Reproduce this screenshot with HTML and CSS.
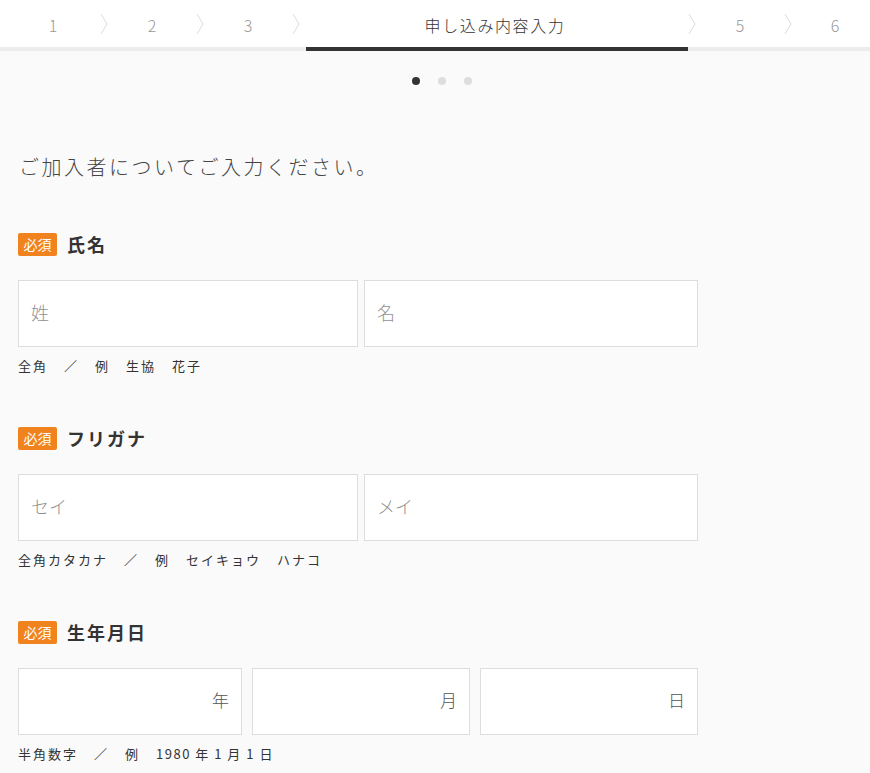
FILE: index.html
```html
<!DOCTYPE html>
<html lang="ja">
<head>
<meta charset="UTF-8">
<meta name="viewport" content="width=device-width, initial-scale=1.0">
<title>申し込み内容入力</title>
<link rel="stylesheet" href="styles.css">
</head>
<body>
<nav class="steps">
  <div class="step first">1</div>
  <svg class="chev" viewBox="0 0 8 20"><polyline points="1,0 7,10 1,20"/></svg>
  <div class="step">2</div>
  <svg class="chev" viewBox="0 0 8 20"><polyline points="1,0 7,10 1,20"/></svg>
  <div class="step">3</div>
  <svg class="chev" viewBox="0 0 8 20"><polyline points="1,0 7,10 1,20"/></svg>
  <div class="step active">申し込み内容入力</div>
  <svg class="chev" viewBox="0 0 8 20"><polyline points="1,0 7,10 1,20"/></svg>
  <div class="step">5</div>
  <svg class="chev" viewBox="0 0 8 20"><polyline points="1,0 7,10 1,20"/></svg>
  <div class="step last">6</div>
</nav>

<div class="dots">
  <span class="dot on"></span>
  <span class="dot"></span>
  <span class="dot"></span>
</div>

<main class="form">
  <h1 class="lead">ご加入者についてご入力ください。</h1>

  <section class="field">
    <div class="label"><span class="req">必須</span>氏名</div>
    <div class="inputs two">
      <input type="text" placeholder="姓">
      <input type="text" placeholder="名">
    </div>
    <p class="hint"><span>全角</span><span>／</span><span>例</span><span>生協</span><span>花子</span></p>
  </section>

  <section class="field">
    <div class="label"><span class="req">必須</span>フリガナ</div>
    <div class="inputs two">
      <input type="text" placeholder="セイ">
      <input type="text" placeholder="メイ">
    </div>
    <p class="hint"><span>全角カタカナ</span><span>／</span><span>例</span><span>セイキョウ</span><span>ハナコ</span></p>
  </section>

  <section class="field">
    <div class="label"><span class="req">必須</span>生年月日</div>
    <div class="inputs three">
      <label class="unit"><input type="text"><span>年</span></label>
      <label class="unit"><input type="text"><span>月</span></label>
      <label class="unit"><input type="text"><span>日</span></label>
    </div>
    <p class="hint"><span>半角数字</span><span>／</span><span>例</span><span class="num">1980 年 1 月 1 日</span></p>
  </section>
</main>
</body>
</html>
```

FILE: styles.css
```css
body {
  margin: 0;
  background: #fafafa;
  color: #333;
  font-family: "Noto Sans CJK JP", "Noto Sans", sans-serif;
}
.steps {
  display: flex;
  align-items: center;
  height: 47px;
  background: #fff;
  border-bottom: 4px solid #ececec;
}
.step {
  flex: none;
  box-sizing: border-box;
  width: 88px;
  height: 47px;
  line-height: 50px;
  text-align: center;
  font-size: 16px;
  font-weight: 300;
  color: #999;
}
.step.first {
  width: 100px;
  padding-left: 6px;
}
.step.last {
  flex: 1;
  padding-left: 8px;
}
.step.active {
  position: relative;
  width: 382px;
  margin-left: 6px;
  padding-right: 4px;
  color: #333;
  letter-spacing: 1.6px;
}
.step.active::after {
  content: "";
  position: absolute;
  left: 0;
  right: 0;
  bottom: -4px;
  height: 4px;
  background: #333;
}
.chev {
  flex: none;
  width: 8px;
  height: 20px;
}
.chev polyline {
  fill: none;
  stroke: #ddd;
  stroke-width: 1;
}
.dots {
  display: flex;
  justify-content: center;
  gap: 18px;
  margin: 26px 0 0 14px;
}
.dot {
  width: 8px;
  height: 8px;
  border-radius: 50%;
  background: #ddd;
}
.dot.on {
  background: #333;
}
.form {
  width: 680px;
  padding: 0 0 0 18px;
}
.lead {
  margin: 67px 0 0 1px;
  font-size: 20px;
  line-height: 30px;
  font-weight: 300;
  letter-spacing: 2.5px;
  color: #444;
}
.field {
  margin-top: 51px;
}
.field + .field {
  margin-top: 51px;
}
.label {
  display: flex;
  align-items: center;
  gap: 10px;
  font-size: 18px;
  font-weight: 700;
  line-height: 23px;
  letter-spacing: 2px;
}
.req {
  width: 39px;
  height: 23px;
  border-radius: 2px;
  background: #f0831e;
  color: #fff;
  font-size: 14px;
  font-weight: 400;
  line-height: 23px;
  letter-spacing: 0;
  text-align: center;
}
.inputs {
  display: grid;
  margin-top: 24px;
}
.inputs.two {
  grid-template-columns: 340px 334px;
  gap: 6px;
}
.inputs.three {
  grid-template-columns: 224px 218px 218px;
  gap: 10px;
}
input {
  box-sizing: border-box;
  width: 100%;
  height: 67px;
  margin: 0;
  padding: 0 12px 3px;
  border: 1px solid #ddd;
  border-radius: 0;
  background: #fff;
  font-family: inherit;
  font-size: 18px;
  font-weight: 300;
  color: #333;
  outline: none;
}
input::placeholder {
  color: #919191;
}
.unit {
  display: flex;
  align-items: center;
  height: 67px;
  box-sizing: border-box;
  border: 1px solid #ddd;
  background: #fff;
}
.unit input {
  flex: 1;
  min-width: 0;
  height: 65px;
  border: 0;
}
.unit span {
  padding: 0 12px 5px 0;
  font-size: 17px;
  font-weight: 300;
  color: #555;
}
.hint {
  display: flex;
  gap: 16px;
  margin: 9px 0 0;
  font-size: 13px;
  line-height: 20px;
  letter-spacing: 2px;
  color: #333;
}
.hint .num {
  letter-spacing: 1.5px;
}
```
